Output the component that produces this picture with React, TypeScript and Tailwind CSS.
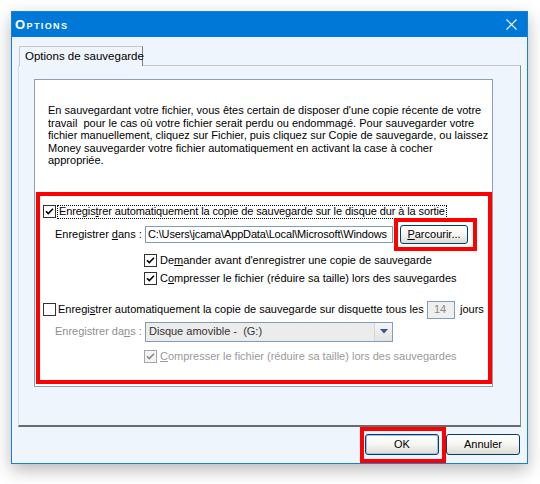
import React from 'react';

type CheckProps = { checked?: boolean; disabled?: boolean };

function CheckBox({ checked, disabled }: CheckProps) {
  const edge = disabled ? '#a6a6a6' : '#333333';
  const tick = disabled ? '#8a8a8a' : '#000000';
  return (
    <svg width="13" height="13" viewBox="0 0 13 13" className="shrink-0">
      <rect x="0.5" y="0.5" width="12" height="12" fill={disabled ? '#f4f4f4' : '#ffffff'} stroke={edge} />
      {checked && <path d="M3 6.2 L5.3 8.6 L10 3.8" fill="none" stroke={tick} strokeWidth="1.6" />}
    </svg>
  );
}

function Key({ children }: { children: React.ReactNode }) {
  return <span className="underline underline-offset-1">{children}</span>;
}

function XpButton({ children, isDefault }: { children: React.ReactNode; isDefault?: boolean }) {
  return (
    <div
      className={
        'flex h-full w-full items-center justify-center rounded-[3px] border border-[#003c74] bg-gradient-to-b from-white via-[#f5f5f1] to-[#dcdcd4] text-[11px] text-black ' +
        (isDefault ? 'shadow-[inset_0_0_0_1px_#a9c1ea]' : '')
      }
    >
      {children}
    </div>
  );
}

export default function App() {
  return (
    <div className="w-[540px] h-[484px] bg-white pt-[11px] pl-[11px] font-['Liberation_Sans',Arial,sans-serif] text-[11px] text-black">
      <div className="flex w-[517px] h-[453px] flex-col border border-[#1a7fd4] bg-[#eef5fc] shadow-[0_6px_16px_rgba(0,0,0,0.28)]">
        {/* title bar */}
        <div className="flex h-[25px] items-center justify-between bg-[#0078d7] pl-[3px] pr-[10px]">
          <span className="text-[13px] font-bold tracking-[1.4px] text-white [font-variant:small-caps]">Options</span>
          <svg width="11" height="11" viewBox="0 0 11 11">
            <path d="M0.5 0.5 L10.5 10.5 M10.5 0.5 L0.5 10.5" stroke="#ffffff" strokeWidth="1.1" />
          </svg>
        </div>

        <div className="flex flex-1 flex-col px-[6px] pt-[9px]">
          {/* tab */}
          <div className="relative z-10 -mb-px ml-px flex h-[20px] w-[124px] items-center whitespace-nowrap border-l border-r border-t border-l-[#c4c8cc] border-r-[#7d7d7d] border-t-[#c4c8cc] bg-[#eef5fc] pl-[5px] text-[11.5px]">
            Options de sauvegarde
          </div>

          {/* tab panel */}
          <div className="h-[362px] border-l border-r border-t border-b-2 border-l-[#d8dce0] border-t-[#c4c8cc] border-r-[#8a8a8a] border-b-[#6b6b6b] pl-[15px] pt-[13px]">
            <div className="h-[308px] w-[459px] border border-[#8f9eb3] bg-white pt-[24px]">
              <p className="whitespace-pre pl-[13px] leading-[12.5px]">
                {"En sauvegardant votre fichier, vous êtes certain de disposer d'une copie récente de votre"}
                <br />
                {'travail  pour le cas où votre fichier serait perdu ou endommagé. Pour sauvegarder votre'}
                <br />
                {'fichier manuellement, cliquez sur Fichier, puis cliquez sur Copie de sauvegarde, ou laissez'}
                <br />
                {'Money sauvegarder votre fichier automatiquement en activant la case à cocher'}
                <br />
                {'appropriée.'}
              </p>

              {/* highlighted group */}
              <div className="ml-px mt-[25px] h-[192px] w-[456px] border-4 border-[#ff0000]">
                <div className="mt-[9px] flex h-[14px] items-center pl-[3px]">
                  <CheckBox checked />
                  <span className="ml-px flex h-[14px] items-center whitespace-nowrap border border-dotted border-black px-px tracking-[-0.1px]">
                    Enregis<Key>t</Key>rer automatiquement la copie de sauvegarde sur le disque dur à la sortie
                  </span>
                </div>

                <div className="mt-[6px] flex h-[19px] items-center pl-[15px]">
                  <span className="w-[90px] shrink-0 whitespace-nowrap">
                    Enregistrer <Key>d</Key>ans :
                  </span>
                  <div className="h-[17px] w-[248px] shrink-0 overflow-hidden border border-[#7f9db9] bg-white pl-[2px] leading-[15px] tracking-[-0.15px]">
                    <span className="whitespace-nowrap">C:\Users\jcama\AppData\Local\Microsoft\Windows</span>
                  </div>
                  <div className="ml-px flex h-[33px] w-[83px] shrink-0 items-center border-4 border-[#ff0000] pl-[2px]">
                    <div className="h-[19px] w-[68px]">
                      <XpButton>
                        <span className="whitespace-nowrap">
                          <Key>P</Key>arcourir...
                        </span>
                      </XpButton>
                    </div>
                  </div>
                </div>

                <div className="mt-[9px] flex h-[15px] items-center pl-[104px]">
                  <CheckBox checked />
                  <span className="ml-[3px] whitespace-nowrap">
                    De<Key>m</Key>ander avant d'enregistrer une copie de sauvegarde
                  </span>
                </div>

                <div className="mt-[3px] flex h-[15px] items-center pl-[104px]">
                  <CheckBox checked />
                  <span className="ml-[3px] whitespace-nowrap">
                    C<Key>o</Key>mpresser le fichier (réduire sa taille) lors des sauvegardes
                  </span>
                </div>

                <div className="mt-[15px] flex h-[18px] items-center pl-[3px]">
                  <CheckBox />
                  <span className="ml-[2px] w-[369px] shrink-0 whitespace-nowrap">
                    Enregi<Key>s</Key>trer automatiquement la copie de sauvegarde sur disquette tous les
                  </span>
                  <div className="flex h-[18px] w-[28px] items-center border border-[#7f9db9] bg-[#efefef] pl-[6px] text-[#8a8a8a]">
                    14
                  </div>
                  <span className="ml-[5px]">jours</span>
                </div>

                <div className="mt-[3px] flex h-[20px] items-center pl-[15px] text-[#8f8f8f]">
                  <span className="w-[90px] shrink-0 whitespace-nowrap">
                    Enregistrer da<Key>n</Key>s :
                  </span>
                  <div className="flex h-[20px] w-[248px] items-center border border-[#7f9db9] bg-[#ececec]">
                    <span className="flex-1 whitespace-pre pl-[3px] text-[#333333]">{'Disque amovible -  (G:)'}</span>
                    <div className="flex h-full w-[18px] items-center justify-center border-l border-[#d6d6d6] bg-gradient-to-b from-[#f6f6f6] to-[#e2e2e2]">
                      <svg width="8" height="5" viewBox="0 0 8 5">
                        <path d="M0 0 L8 0 L4 4.5 Z" fill="#2b5797" />
                      </svg>
                    </div>
                  </div>
                </div>

                <div className="mt-[7px] flex h-[15px] items-center pl-[104px]">
                  <CheckBox checked disabled />
                  <span className="ml-[3px] whitespace-nowrap text-[#9a9a9a]">
                    <Key>C</Key>ompresser le fichier (réduire sa taille) lors des sauvegardes
                  </span>
                </div>
              </div>
            </div>
          </div>

          {/* dialog buttons */}
          <div className="flex justify-end pr-px">
            <div className="h-[36px] w-[86px] border-4 border-[#ff0000] pl-px pt-[3px]">
              <div className="h-[21px] w-[74px]">
                <XpButton isDefault>OK</XpButton>
              </div>
            </div>
            <div className="mt-[7px] h-[21px] w-[74px]">
              <XpButton>Annuler</XpButton>
            </div>
          </div>
        </div>
      </div>
    </div>
  );
}
